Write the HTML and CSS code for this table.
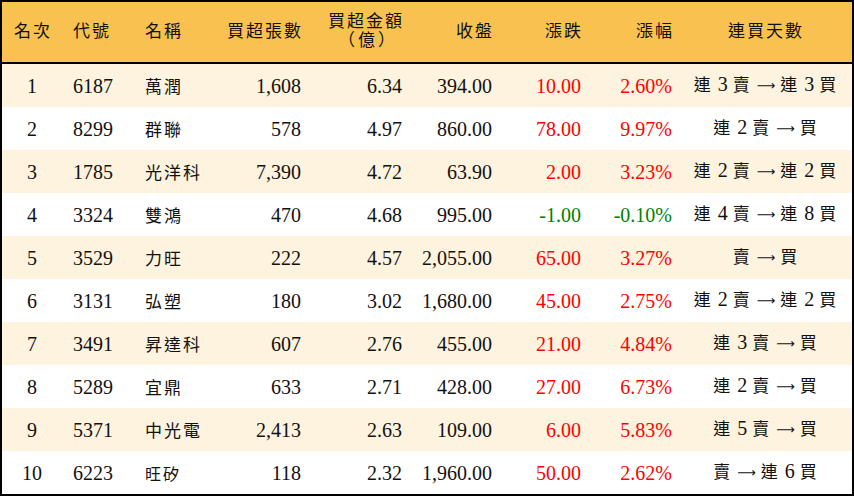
FILE: index.html
```html
<!DOCTYPE html>
<html lang="zh-Hant">
<head>
<meta charset="utf-8">
<title>買超排行</title>
<link rel="stylesheet" href="styles.css">
</head>
<body>
<div class="frame">
<table class="rank">
<colgroup>
<col class="w1"><col class="w2"><col class="w3"><col class="w4"><col class="w5"><col class="w6"><col class="w7"><col class="w8"><col class="w9">
</colgroup>
<thead>
<tr>
<th class="c1">名次</th>
<th class="c2">代號</th>
<th class="c3">名稱</th>
<th class="c4">買超張數</th>
<th class="c5"><span class="two"><span class="l1">買超金額</span><span class="l2">（億）</span></span></th>
<th class="c6">收盤</th>
<th class="c7">漲跌</th>
<th class="c8">漲幅</th>
<th class="c9">連買天數</th>
</tr>
</thead>
<tbody>
<tr class="odd"><td class="c1">1</td><td class="c2">6187</td><td class="c3"><span class="cjk">萬潤</span></td><td class="c4">1,608</td><td class="c5">6.34</td><td class="c6">394.00</td><td class="c7 up">10.00</td><td class="c8 up">2.60%</td><td class="c9"><span class="cjk">連</span> 3 <span class="cjk">賣</span> <span class="arr">⟶</span> <span class="cjk">連</span> 3 <span class="cjk">買</span></td></tr>
<tr><td class="c1">2</td><td class="c2">8299</td><td class="c3"><span class="cjk">群聯</span></td><td class="c4">578</td><td class="c5">4.97</td><td class="c6">860.00</td><td class="c7 up">78.00</td><td class="c8 up">9.97%</td><td class="c9"><span class="cjk">連</span> 2 <span class="cjk">賣</span> <span class="arr">⟶</span> <span class="cjk">買</span></td></tr>
<tr class="odd"><td class="c1">3</td><td class="c2">1785</td><td class="c3"><span class="cjk">光洋科</span></td><td class="c4">7,390</td><td class="c5">4.72</td><td class="c6">63.90</td><td class="c7 up">2.00</td><td class="c8 up">3.23%</td><td class="c9"><span class="cjk">連</span> 2 <span class="cjk">賣</span> <span class="arr">⟶</span> <span class="cjk">連</span> 2 <span class="cjk">買</span></td></tr>
<tr><td class="c1">4</td><td class="c2">3324</td><td class="c3"><span class="cjk">雙鴻</span></td><td class="c4">470</td><td class="c5">4.68</td><td class="c6">995.00</td><td class="c7 down">-1.00</td><td class="c8 down">-0.10%</td><td class="c9"><span class="cjk">連</span> 4 <span class="cjk">賣</span> <span class="arr">⟶</span> <span class="cjk">連</span> 8 <span class="cjk">買</span></td></tr>
<tr class="odd"><td class="c1">5</td><td class="c2">3529</td><td class="c3"><span class="cjk">力旺</span></td><td class="c4">222</td><td class="c5">4.57</td><td class="c6">2,055.00</td><td class="c7 up">65.00</td><td class="c8 up">3.27%</td><td class="c9"><span class="cjk">賣</span> <span class="arr">⟶</span> <span class="cjk">買</span></td></tr>
<tr><td class="c1">6</td><td class="c2">3131</td><td class="c3"><span class="cjk">弘塑</span></td><td class="c4">180</td><td class="c5">3.02</td><td class="c6">1,680.00</td><td class="c7 up">45.00</td><td class="c8 up">2.75%</td><td class="c9"><span class="cjk">連</span> 2 <span class="cjk">賣</span> <span class="arr">⟶</span> <span class="cjk">連</span> 2 <span class="cjk">買</span></td></tr>
<tr class="odd"><td class="c1">7</td><td class="c2">3491</td><td class="c3"><span class="cjk">昇達科</span></td><td class="c4">607</td><td class="c5">2.76</td><td class="c6">455.00</td><td class="c7 up">21.00</td><td class="c8 up">4.84%</td><td class="c9"><span class="cjk">連</span> 3 <span class="cjk">賣</span> <span class="arr">⟶</span> <span class="cjk">買</span></td></tr>
<tr><td class="c1">8</td><td class="c2">5289</td><td class="c3"><span class="cjk">宜鼎</span></td><td class="c4">633</td><td class="c5">2.71</td><td class="c6">428.00</td><td class="c7 up">27.00</td><td class="c8 up">6.73%</td><td class="c9"><span class="cjk">連</span> 2 <span class="cjk">賣</span> <span class="arr">⟶</span> <span class="cjk">買</span></td></tr>
<tr class="odd"><td class="c1">9</td><td class="c2">5371</td><td class="c3"><span class="cjk">中光電</span></td><td class="c4">2,413</td><td class="c5">2.63</td><td class="c6">109.00</td><td class="c7 up">6.00</td><td class="c8 up">5.83%</td><td class="c9"><span class="cjk">連</span> 5 <span class="cjk">賣</span> <span class="arr">⟶</span> <span class="cjk">買</span></td></tr>
<tr><td class="c1">10</td><td class="c2">6223</td><td class="c3"><span class="cjk small">旺矽</span></td><td class="c4">118</td><td class="c5">2.32</td><td class="c6">1,960.00</td><td class="c7 up">50.00</td><td class="c8 up">2.62%</td><td class="c9"><span class="cjk">賣</span> <span class="arr">⟶</span> <span class="cjk">連</span> 6 <span class="cjk">買</span></td></tr>
</tbody>
</table>
</div>
</body>
</html>
```

FILE: styles.css
```css
html, body {
  margin: 0;
  padding: 0;
  background: #ffffff;
}

.frame {
  width: 854px;
  height: 496px;
  box-sizing: border-box;
  border: 2px solid #000;
  overflow: hidden;
}

.rank {
  width: 850px;
  table-layout: fixed;
  border-collapse: collapse;
  border-spacing: 0;
  font-family: "Liberation Serif", "Noto Sans CJK TC", serif;
  font-size: 20px;
  color: #111;
}

.w1 { width: 60px; }
.w2 { width: 73px; }
.w3 { width: 85px; }
.w4 { width: 91px; }
.w5 { width: 101px; }
.w6 { width: 90px; }
.w7 { width: 89px; }
.w8 { width: 89px; }
.w9 { width: 172px; }

.rank th {
  height: 60px;
  padding: 0;
  background: #f9c150;
  border-bottom: 2px solid #000;
  font-family: "Liberation Serif", "Noto Sans CJK TC", serif;
  font-weight: 400;
  font-size: 17px;
  letter-spacing: 2px;
  line-height: 24px;
  white-space: nowrap;
  color: #111;
}

.rank th .two {
  display: inline-flex;
  flex-direction: column;
  align-items: flex-end;
  vertical-align: middle;
  margin-top: -2px;
}

.rank th .two .l1,
.rank th .two .l2 {
  display: block;
  height: 19px;
  line-height: 19px;
}

.rank th .two .l2 {
  margin-right: 6px;
  letter-spacing: 3px;
}

.rank td {
  height: 43px;
  padding: 0;
  line-height: 22px;
  white-space: nowrap;
  vertical-align: middle;
}

.rank tbody tr.odd td {
  background: #fdf3de;
}

.cjk {
  font-family: "Noto Sans CJK TC", sans-serif;
  font-size: 17px;
  letter-spacing: 2px;
}

.cjk.small {
  font-size: 16px;
}

.arr {
  font-family: "DejaVu Sans", sans-serif;
  font-size: 13px;
  position: relative;
  top: -1px;
}

.c1 { text-align: center; }
.c2 { text-align: left; padding-left: 11px !important; }
.c3 { text-align: left; padding-left: 10px !important; }
.c4, .c5, .c6, .c7 { text-align: right; padding-right: 10px !important; }
.c8 { text-align: right; padding-right: 8px !important; }
.c9 { text-align: center; }

th.c1 { padding-left: 2px !important; }
th.c4, th.c5, th.c6, th.c7 { padding-right: 8px !important; }
th.c8 { padding-right: 6px !important; }

.up { color: #ff0000; }
.down { color: #008000; }
```
